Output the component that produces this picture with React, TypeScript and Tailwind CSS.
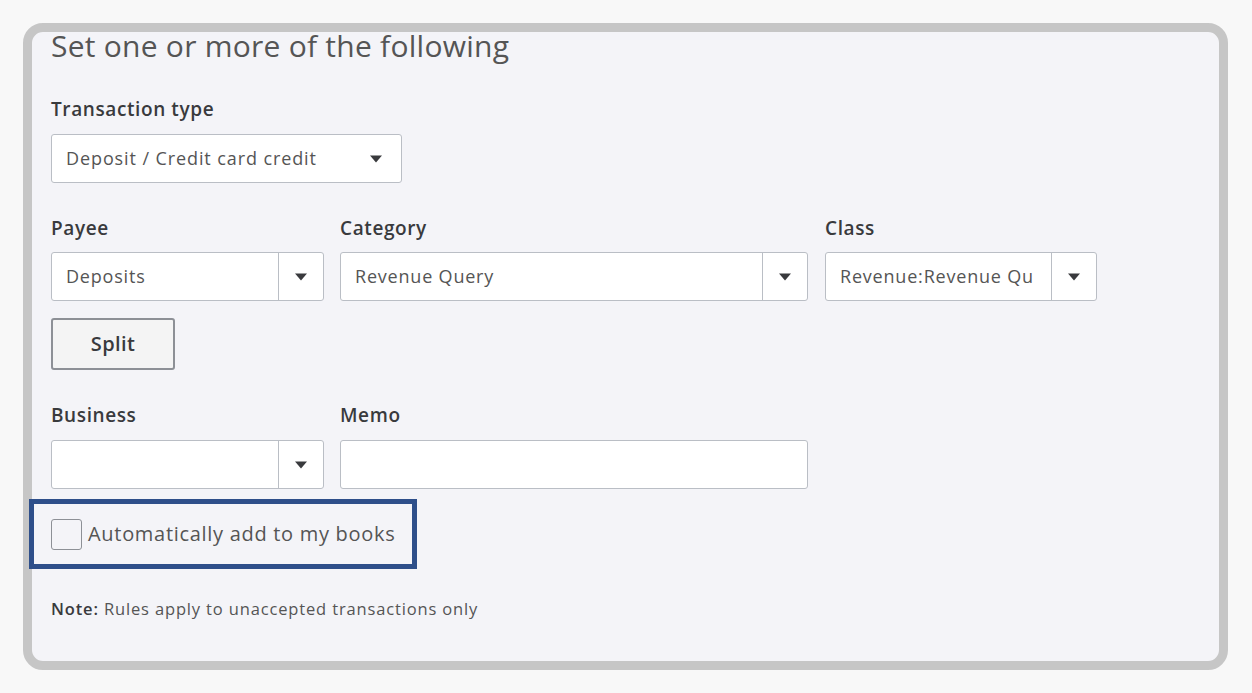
import * as React from "react";

const font = { fontFamily: '"Open Sans", "Liberation Sans", sans-serif' };

function Caret() {
  return (
    <svg width="12" height="8" viewBox="0 0 12 8" aria-hidden="true">
      <path d="M0 0.5h12L6 7.5z" fill="#393a3d" />
    </svg>
  );
}

function Label({ children }: { children: React.ReactNode }) {
  return (
    <div className="h-[24px] text-[19px] leading-[24px] font-semibold tracking-[0.6px] text-[#393a3d]">
      {children}
    </div>
  );
}

function Combo({ width, value }: { width: string; value?: string }) {
  return (
    <div
      className={`flex h-[49px] ${width} overflow-hidden rounded-[3px] border border-[#babec5] bg-white`}
    >
      <div className="flex min-w-0 flex-1 items-center overflow-hidden whitespace-nowrap pl-[14px] pr-[8px] text-[18px] tracking-[0.8px] text-[#555]">
        {value}
      </div>
      <div className="flex w-[45px] shrink-0 items-center justify-center border-l border-[#babec5]">
        <Caret />
      </div>
    </div>
  );
}

export default function App() {
  return (
    <div className="min-h-[693px] bg-[#f8f8f8] p-[23px]" style={font}>
      <div className="h-[647px] w-[1205px] rounded-[20px] border-[9px] border-[#c6c6c6] bg-[#f4f4f8]">
        <div className="flex flex-col px-[19px]">
          <h2 className="h-[28px] text-[30px] leading-[28px] font-normal tracking-[0.25px] text-[#555]">
            Set one or more of the following
          </h2>

          <div className="mt-[37px]">
            <Label>Transaction type</Label>
          </div>
          <div className="mt-[13px] flex h-[49px] w-[351px] items-center justify-between rounded-[3px] border border-[#babec5] bg-white pl-[14px] pr-[19px] text-[18px] tracking-[0.9px] text-[#555]">
            <span>Deposit / Credit card credit</span>
            <Caret />
          </div>

          <div className="mt-[33px] flex gap-[16px]">
            <div className="w-[273px]">
              <Label>Payee</Label>
              <div className="mt-[12px]">
                <Combo width="w-[273px]" value="Deposits" />
              </div>
            </div>
            <div className="w-[468px]">
              <Label>Category</Label>
              <div className="mt-[12px]">
                <Combo width="w-[468px]" value="Revenue Query" />
              </div>
            </div>
            <div className="ml-[1px] w-[272px]">
              <Label>Class</Label>
              <div className="mt-[12px]">
                <Combo width="w-[272px]" value="Revenue:Revenue Qu" />
              </div>
            </div>
          </div>

          <button className="mt-[17px] h-[52px] w-[124px] rounded-[3px] border-2 border-[#8d9096] bg-[#f4f4f4] text-[20px] font-semibold tracking-[0.4px] text-[#393a3d]">
            Split
          </button>

          <div className="mt-[33px] flex gap-[16px]">
            <div className="w-[273px]">
              <Label>Business</Label>
              <div className="mt-[13px]">
                <Combo width="w-[273px]" />
              </div>
            </div>
            <div className="w-[468px]">
              <Label>Memo</Label>
              <div className="mt-[13px] h-[49px] w-[468px] rounded-[3px] border border-[#babec5] bg-white" />
            </div>
          </div>

          <div className="-ml-[22px] mt-[10px] flex h-[70px] w-[388px] items-center border-[5px] border-[#2e4f8a] pl-[17px]">
            <div className="h-[31px] w-[31px] shrink-0 rounded-[3px] border-[1.5px] border-[#8d9096]" />
            <span className="ml-[6px] whitespace-nowrap text-[20px] tracking-[0.7px] text-[#555]">
              Automatically add to my books
            </span>
          </div>

          <p className="mt-[30px] h-[20px] text-[16.5px] leading-[20px] tracking-[0.85px] text-[#555]">
            <span className="font-semibold text-[#393a3d]">Note:</span> Rules apply to
            unaccepted transactions only
          </p>
        </div>
      </div>
    </div>
  );
}
